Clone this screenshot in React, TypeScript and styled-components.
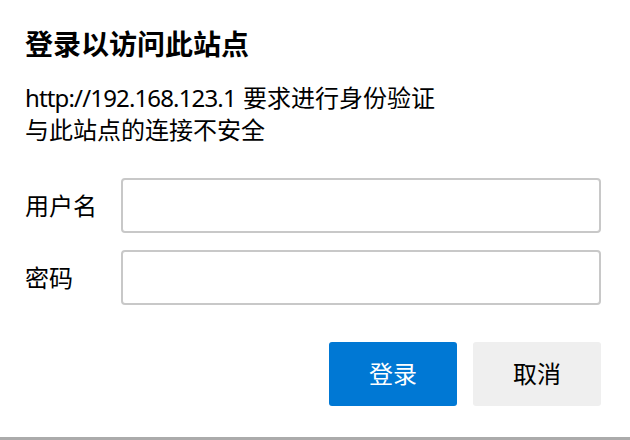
import React from "react";
import styled, { createGlobalStyle } from "styled-components";

const Global = createGlobalStyle`
  html, body { margin: 0; padding: 0; background: #ffffff; }
  * { box-sizing: border-box; }
`;

const FONT = `"Noto Sans", "Noto Sans CJK SC", sans-serif`;

const Dialog = styled.div`
  width: 630px;
  height: 440px;
  background: #ffffff;
  border-bottom: 3px solid #ababab;
  padding: 26px 29px 0 25px;
  display: flex;
  flex-direction: column;
  font-family: ${FONT};
  color: #000000;
`;

const Title = styled.h1`
  margin: 0;
  font-size: 28px;
  line-height: 36px;
  font-weight: 700;
`;

const Message = styled.p`
  margin: 20px 0 0 0;
  font-size: 24px;
  line-height: 32px;
  font-weight: 400;
`;

const Url = styled.span`
  letter-spacing: -0.85px;
  margin-right: 1px;
`;

const Form = styled.div`
  margin-top: 32px;
  display: flex;
  flex-direction: column;
  gap: 17px;
`;

const Row = styled.label`
  display: flex;
  align-items: center;
`;

const Label = styled.span`
  width: 96px;
  flex: none;
  font-size: 24px;
  line-height: 32px;
`;

const Input = styled.input`
  flex: 1;
  height: 55px;
  border: 2px solid #c8c8c8;
  border-radius: 4px;
  background: #ffffff;
  outline: none;
  padding: 0 12px;
  font-family: ${FONT};
  font-size: 22px;
`;

const Actions = styled.div`
  margin-top: 37px;
  display: flex;
  justify-content: flex-end;
  gap: 16px;
`;

const Button = styled.button<{ $primary?: boolean }>`
  width: 128px;
  height: 64px;
  border: none;
  border-radius: 3px;
  background: ${(p) => (p.$primary ? "#0078d4" : "#efefef")};
  color: ${(p) => (p.$primary ? "#ffffff" : "#000000")};
  font-family: ${FONT};
  font-size: 24px;
  line-height: 32px;
  padding: 0;
  cursor: pointer;
`;

export default function App() {
  return (
    <>
      <Global />
      <Dialog>
        <Title>登录以访问此站点</Title>
        <Message>
          <Url>http://192.168.123.1</Url> 要求进行身份验证
          <br />
          与此站点的连接不安全
        </Message>
        <Form>
          <Row>
            <Label>用户名</Label>
            <Input type="text" />
          </Row>
          <Row>
            <Label>密码</Label>
            <Input type="password" />
          </Row>
        </Form>
        <Actions>
          <Button $primary>登录</Button>
          <Button>取消</Button>
        </Actions>
      </Dialog>
    </>
  );
}
